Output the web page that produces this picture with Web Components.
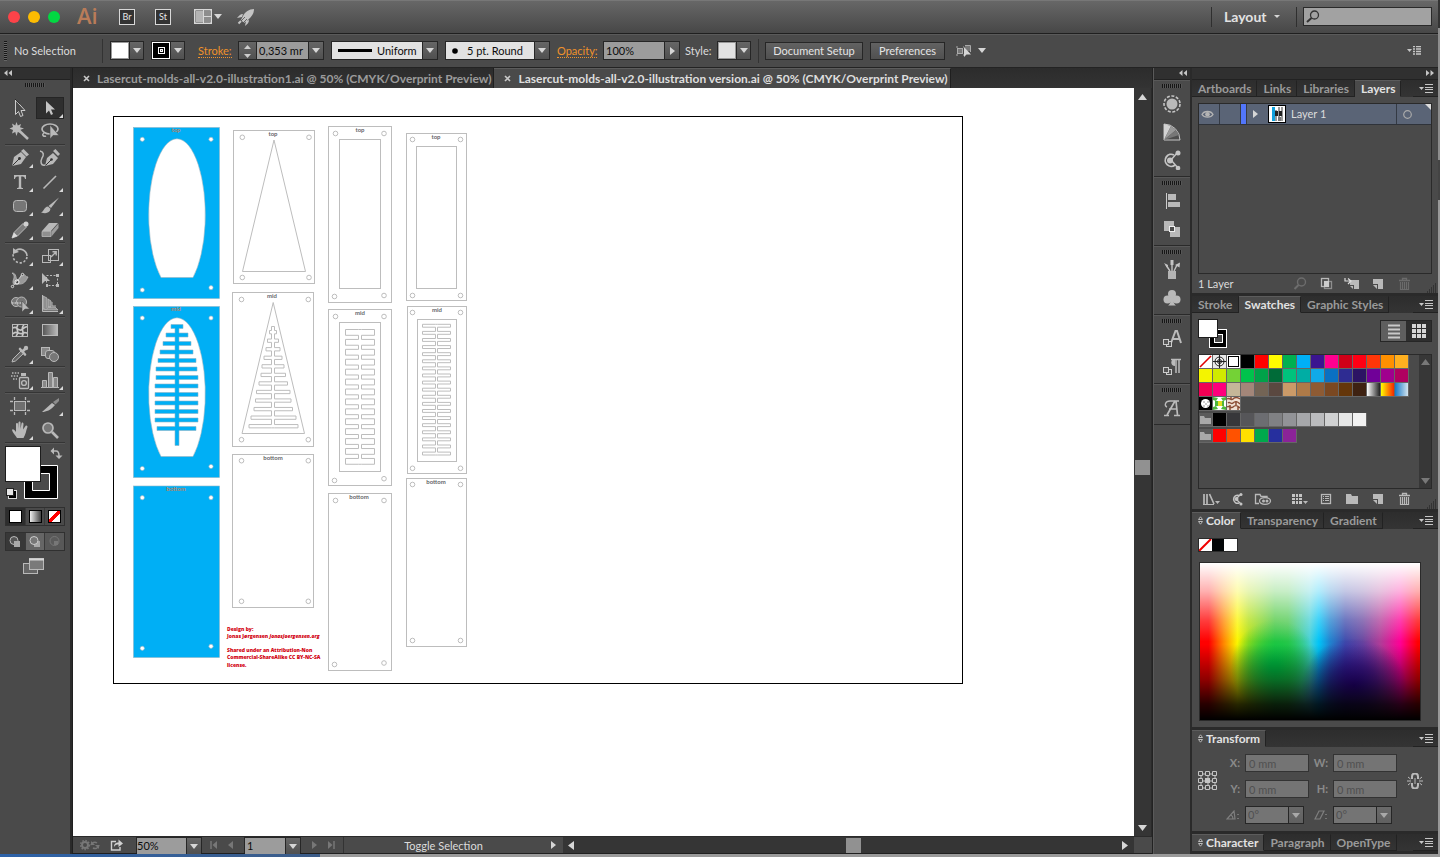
<!DOCTYPE html>
<html lang="en">
<head>
<meta charset="utf-8">
<title>Lasercut-molds-all-v2.0-illustration version.ai</title>
<style>
  html { background: #3b3b3b; }
  body { margin: 0; font: 11px/14px Lato, "Liberation Sans", sans-serif; color: #dcdcdc; }
</style>
</head>
<body>
<ai-app></ai-app>
<script>
/* ---------- helpers ---------- */
const reset = `
  *, *::before, *::after { box-sizing: border-box; }
  button, input, select { font: inherit; color: inherit; margin: 0; padding: 0; border: 0; background: none; border-radius: 0; appearance: none; outline: 0; }
  button { display: inline-flex; align-items: center; justify-content: center; }
`;
function define(name, css, html) {
  customElements.define(name, class extends HTMLElement {
    connectedCallback() {
      if (this.shadowRoot) return;
      const root = this.attachShadow({ mode: 'open' });
      root.innerHTML = `<style>${reset}${css}</style>` + (typeof html === 'function' ? html(this) : html);
    }
  });
}

/* ---------- icon set: [width, height, drawing] ---------- */
const g = '#b9b9b9';
const icons = {
  down: [8, 5, `<path d="M0 0H8L4 5Z" fill="#d6d6d6"/>`],
  smalldown: [6, 3, `<path d="M0 0H6L3 3Z" fill="#d6d6d6"/>`],
  right: [5, 8, `<path d="M0 0L5 4L0 8Z" fill="#d6d6d6"/>`],
  up10: [9, 6, `<path d="M0 6H9L4.500 0Z" fill="#d6d6d6"/>`],
  down10: [9, 6, `<path d="M0 0H9L4.500 6Z" fill="#d6d6d6"/>`],
  left10: [6, 9, `<path d="M6 0V9L0 4.500Z" fill="#d6d6d6"/>`],
  right10: [6, 9, `<path d="M0 0V9L6 4.500Z" fill="#d6d6d6"/>`],
  collapse: [8, 6, `<path d="M3.500 0V6L0 3ZM8 0V6L4.500 3Z" fill="#c6c6c6"/>`],
  expand: [8, 6, `<path d="M0 0V6L3.500 3ZM4.500 0V6L8 3Z" fill="#c6c6c6"/>`],
  close: [7, 7, `<path d="M1 1L6 6M6 1L1 6" stroke="#c8c8c8" stroke-width="1.600"/>`],
  flyout: [14, 9, `<path d="M0 3H5L2.500 6Z" fill="#c6c6c6"/><path d="M6 .5H14M6 3.500H14M6 5.500H14M6 8.500H14" stroke="#c6c6c6"/>`],
  barmenu: [14, 9, `<path d="M0 3H5L2.500 6Z" fill="#c6c6c6"/><path d="M6 .5H8M6 3H8M6 5.500H8M6 8H8M9 .5H14M9 3H14M9 5.500H14M9 8H14" stroke="#c6c6c6" stroke-width="1.300"/>`],
  arrange: [18, 15, `<rect x=".75" y=".75" width="16.500" height="13.500" fill="#4a4a4a" stroke="#d8d8d8" stroke-width="1.500"/><rect x="2" y="2" width="7" height="11" fill="#b4b4b4"/><rect x="10" y="2" width="6" height="5" fill="#8d8d8d"/><rect x="10" y="8" width="6" height="5" fill="#8d8d8d"/><path d="M9.500 1V14M9.500 7.500H17" stroke="#d8d8d8"/>`],
  rocket: [18, 18, `<path d="M17 1C12 1 8 4 6 8L4 12L7 15L11 12C14 9 17 6 17 1Z" fill="#c4c4c4"/><path d="M6 6C3 6 2 8 0 10L5 9ZM12 12C12 15 10 16 8 18L9 13Z" fill="#c4c4c4"/><path d="M3 14L8 9M5 16L10 11" stroke="#4c4c4c" stroke-width=".8"/><path d="M1.500 15.500L4 13" stroke="#c4c4c4" stroke-width="2"/>`],
  magnifier: [14, 13, `<circle cx="8.500" cy="5" r="4" fill="none" stroke="#333" stroke-width="1.300"/><path d="M5.500 8L1 12" stroke="#333" stroke-width="2"/>`],
  isolate: [16, 14, `<rect x="1.500" y="4.500" width="5" height="5" fill="#777" stroke="#aaa"/><path d="M0 3H2M0 11H2M7 3H8M7 11H8" stroke="#aaa"/><path d="M9 1.500H14.500V8" fill="none" stroke="#aaa"/><rect x="9" y="2" width="5" height="5" fill="#777"/><path d="M8 3V13L10.500 10.500H15Z" fill="#d6d6d6"/>`],
  /* tools */
  direct: [24, 24, `<path d="M7.500 4V18.500L10.500 15.500L12.500 20.500L15 19.500L13 14.500H17Z" fill="#4a4a4a" stroke="#ccc"/><path d="M7 3L12 8" stroke="#222" stroke-width=".8"/>`],
  select: [24, 24, `<path d="M8 5V17.500L11 14.500L13 19L15 18L13 13.500H17Z" fill="#c4c4c4"/>`],
  wand: [24, 24, `<path d="M8.500 2L9.800 5.500L13 4L12 7.300L16 8.500L12 10L13 13L9.800 12L8.500 16L7.200 12L4 13.500L5 10L1.500 8.500L5 7L4 3.500L7.200 5.500Z" fill="${g}"/><path d="M11 10.500L20 19" stroke="${g}" stroke-width="2.600"/>`],
  lasso: [24, 24, `<ellipse cx="12" cy="9" rx="8" ry="5" fill="none" stroke="${g}" stroke-width="1.700"/><path d="M6 13C3 15 6 17 8 16" fill="none" stroke="${g}" stroke-width="1.500"/><path d="M12 5V19L15 15.500H21Z" fill="${g}" stroke="#444" stroke-width=".6"/>`],
  pen: [24, 24, `<path d="M4 20L6 11L13 6L18 11L13 18L4 20Z" fill="${g}"/><path d="M13 5L15.500 3L21 8.500L18.500 10.500Z" fill="${g}"/><path d="M4.500 19.500L11 13" stroke="#333"/><circle cx="11.500" cy="12.500" r="1.400" fill="#333"/>`],
  curv: [24, 24, `<path d="M7 20L9 12L15 7L20 12L15 18Z" fill="${g}"/><path d="M15 5L17.500 3L22 8L20 10Z" fill="${g}"/><path d="M7.500 19.500L13 14" stroke="#333"/><circle cx="13.500" cy="13.500" r="1.300" fill="#333"/><path d="M2 5C6 6 6 9 4 12C2 16 3 20 7 19" fill="none" stroke="${g}" stroke-width="1.500"/>`],
  type: [24, 24, `<path d="M6 5H18V9H17C16.700 7 16 6.500 13.200 6.500V16.500C13.200 17.600 13.600 18 15 18V19H9V18C10.400 18 10.800 17.600 10.800 16.500V6.500C8 6.500 7.300 7 7 9H6Z" fill="${g}"/>`],
  line: [24, 24, `<path d="M5.500 18.500L18 6" stroke="${g}" stroke-width="1.600"/>`],
  rrect: [24, 24, `<rect x="5.500" y="6.500" width="13" height="11" rx="3" fill="#777" stroke="${g}"/>`],
  brush: [24, 24, `<path d="M21 3.500L13 14L10.500 12Z" fill="${g}"/><path d="M10 12.500L12.500 14.800C12 19 8 20 3 18.500C6 17.500 6 13 10 12.500Z" fill="${g}"/>`],
  pencil: [24, 24, `<path d="M4 20L6 14.500L15 5.500L18.500 9L9.500 18Z" fill="#7d7d7d" stroke="${g}"/><path d="M4 20L6 14.500L9.500 18Z" fill="#ddd"/><circle cx="18" cy="6" r="2.500" fill="#d0d0d0"/>`],
  eraser: [24, 24, `<path d="M4 13L11 5H20L13 13Z" fill="${g}"/><path d="M4 13.500H13V18.500H4Z" fill="#8f8f8f" stroke="${g}" stroke-width=".8"/><path d="M13.500 13.500L20.500 5.500V10L13.500 18.500Z" fill="#9d9d9d"/>`],
  rotate: [24, 24, `<path d="M8 6.500A7 7 0 0 1 19 12" fill="none" stroke="${g}" stroke-width="1.600"/><path d="M19 13A7 7 0 1 1 5.500 9.500" fill="none" stroke="${g}" stroke-width="1.600" stroke-dasharray="2.200 1.800"/><path d="M5 4V10L11 8Z" fill="${g}"/>`],
  scale: [24, 24, `<rect x="10.500" y="5.500" width="10" height="11" fill="none" stroke="${g}"/><rect x="4.500" y="11.500" width="8" height="7" fill="none" stroke="${g}"/><path d="M13 13L18 8M14.500 7.800H18.200V11.500" fill="none" stroke="${g}" stroke-width="1.400"/>`],
  width: [24, 24, `<path d="M4 5C9 5 7 11 10 12C13 11 12 6 15 6C17 6 17 9 20 9C18 13 16 16 12 16C9 16 5 18 5 14C5 11 8 8 4 5Z" fill="#999" stroke="${g}" stroke-width=".8"/><circle cx="9" cy="14" r="2" fill="#444" stroke="#fff"/><path d="M4 19L14 7" stroke="#ddd" stroke-width=".8"/><circle cx="4.500" cy="18.500" r="1.200" fill="#444" stroke="#ddd"/><circle cx="14.500" cy="6.500" r="1.200" fill="#444" stroke="#ddd"/>`],
  free: [24, 24, `<rect x="8.500" y="7.500" width="11" height="10" fill="none" stroke="${g}" stroke-dasharray="2 1.500"/><path d="M18 6H21V9H18ZM18 16H21V19H18ZM8 16H10V19H8Z" fill="${g}"/><path d="M4 5V16L7 13H12Z" fill="${g}"/>`],
  builder: [24, 24, `<circle cx="8" cy="10" r="4.500" fill="#777" stroke="${g}"/><circle cx="13.500" cy="10" r="5" fill="#777" stroke="${g}"/><path d="M4 11H16" stroke="#eee" stroke-dasharray="1.500 1"/><path d="M14 9V20L17 17H21.500Z" fill="${g}" stroke="#444" stroke-width=".5"/>`],
  persp: [24, 24, `<path d="M5 4L9 6V17H5ZM10 7L13 9V15H10ZM5 18H20L17 15H10" fill="#8f8f8f" stroke="${g}" stroke-width=".8"/><path d="M4.500 3V19.500H20M14 10V14H18" fill="none" stroke="${g}"/>`],
  mesh: [24, 24, `<rect x="4.500" y="6.500" width="15" height="12" fill="none" stroke="${g}"/><path d="M5 10C9 7 9 13 13 12C15 11 17 8 19 9M5 16C8 11 12 18 15 15C17 14 18 15 19 15M10 7C6 11 13 13 8 18M16 7C11 11 18 14 14 18" fill="none" stroke="#c8c8c8" stroke-width="1.600"/>`],
  grad: [24, 24, `<defs><linearGradient id="a"><stop stop-color="#555"/><stop offset="1" stop-color="#bbb"/></linearGradient></defs><rect x="4.500" y="6.500" width="15" height="11" fill="url(#a)" stroke="${g}"/>`],
  dropper: [24, 24, `<path d="M4 20L5 17L13 9L15.500 11.500L7.500 19Z" fill="#666" stroke="${g}"/><path d="M12 7L17 12.500M14.500 9.500L18 6" stroke="${g}" stroke-width="2.600" stroke-linecap="round"/><circle cx="18" cy="6" r="2.200" fill="${g}"/>`],
  blend: [24, 24, `<rect x="3.500" y="5.500" width="8" height="8" fill="#888" stroke="${g}"/><rect x="7.500" y="8.500" width="9" height="8" rx="2.500" fill="#6b6b6b" stroke="${g}"/><circle cx="16" cy="15" r="4.500" fill="#777" stroke="${g}"/>`],
  spray: [24, 24, `<rect x="11.500" y="9.500" width="9" height="11" rx="1" fill="#555" stroke="${g}" stroke-width="1.300"/><circle cx="16" cy="15" r="2.400" fill="none" stroke="${g}" stroke-width="1.400"/><path d="M13 8V5H18V8Z" fill="${g}"/><path d="M4 5H11M3 8H10M5 11H9" stroke="${g}" stroke-width="1.500" stroke-dasharray="1.500 1.300"/>`],
  chart: [24, 24, `<path d="M3 19.500H21" stroke="${g}"/><path d="M4.500 12.500H8.500V19.500H4.500ZM10.500 4.500H14.500V19.500H10.500ZM15.500 9.500H19.500V19.500H15.500Z" fill="#888" stroke="${g}"/>`],
  artboard: [24, 24, `<rect x="6.500" y="7.500" width="11" height="9" fill="#6e6e6e" stroke="${g}"/><path d="M6.500 3V6M17.500 3V6M6.500 18V21M17.500 18V21M2 7.500H5M19 7.500H22M2 16.500H5M19 16.500H22" stroke="${g}" stroke-width="1.300"/>`],
  slice: [24, 24, `<path d="M4 18L14 9L17 11C13 16 8 18 4 18Z" fill="${g}"/><path d="M15 8L21 4V7L17.500 10.500Z" fill="#8d8d8d"/>`],
  hand: [24, 24, `<path d="M4 12C4.500 10.500 6 11 8 14V6C8 4.500 10 4.500 10 6V11L10.500 4.500C10.700 3 12.500 3 12.500 4.500V11L13.500 5.500C13.800 4 15.500 4.500 15.500 6L15 11.500L17.500 8C18.500 7 20 8 19.300 9.500C18 12.500 18 16 15.500 20H9C7.500 17 4.500 15 4 12Z" fill="${g}"/>`],
  zoom: [24, 24, `<circle cx="10" cy="10" r="5" fill="#777" stroke="${g}" stroke-width="1.700"/><path d="M14 14L20 20" stroke="${g}" stroke-width="2.600"/>`],
  fillstroke: [60, 58, `<path d="M49 6H51C53 6 54 7 54 11" fill="none" stroke="${g}" stroke-width="1.500"/><path d="M49 2.500V9.500L45.500 6ZM50.500 10.500H57.500L54 14Z" fill="${g}"/><path d="M19.500 20.500H52.500V53.500H19.500Z" fill="#000" stroke="#fff"/><path d="M27.500 28.500H44.500V45.500H27.500Z" fill="#4a4a4a" stroke="#fff"/><rect x=".5" y="1.500" width="35" height="35" fill="#fff" stroke="#1d1d1d"/><rect x="3.500" y="45.500" width="8" height="8" fill="#000" stroke="#ddd"/><rect x="1.500" y="43.500" width="7" height="7" fill="#e6e6e6" stroke="#222"/>`],
  screen: [22, 17, `<rect x=".5" y="5.500" width="14" height="10" fill="#666" stroke="${g}"/><rect x="6.500" y=".5" width="14" height="11" fill="#7a7a7a" stroke="${g}"/><path d="M6 1.500H21" stroke="#d6d6d6" stroke-width="2"/>`],
  d1: [12, 11, `<circle cx="5" cy="4.500" r="4" fill="#555" stroke="${g}"/><rect x="5" y="5" width="6" height="6" fill="#a9a9a9"/>`],
  d2: [12, 11, `<rect x="5" y="5" width="6" height="6" fill="#a9a9a9"/><circle cx="5" cy="4.500" r="4" fill="#777" stroke="#ccc"/>`],
  d3: [12, 11, `<circle cx="5.500" cy="5" r="4.500" fill="#5b5b5b" stroke="#777"/><rect x="5" y="5" width="4" height="4" fill="#777"/>`],
  /* dock */
  kuler: [20, 20, `<circle cx="10" cy="10" r="8" fill="none" stroke="#c6c6c6" stroke-width="1.600" stroke-dasharray="3 1.600"/><circle cx="10" cy="10" r="5.500" fill="#b9b9b9"/>`],
  guide: [20, 20, `<path d="M2 18V2A16 16 0 0 1 18 18Z" fill="#4d4d4d" stroke="#c4c4c4"/><path d="M2 18V2L9 4Z" fill="#d2d2d2"/><path d="M2 18L9 4L14 8Z" fill="#9a9a9a"/><path d="M2 18L14 8L17 13Z" fill="#777"/>`],
  share: [20, 20, `<path d="M15 3L9 10L16 18" fill="none" stroke="#c4c4c4" stroke-width="1.500"/><path d="M12 5A6 6 0 1 0 13 15" fill="none" stroke="#c4c4c4" stroke-width="1.800"/><circle cx="8" cy="10.500" r="3" fill="#c4c4c4"/><circle cx="16" cy="3" r="2.500" fill="#c4c4c4"/><circle cx="16" cy="18" r="2.300" fill="#c4c4c4"/>`],
  align: [20, 20, `<path d="M4.500 2V18" stroke="#ccc"/><rect x="6" y="3" width="8" height="6" fill="#b9b9b9"/><rect x="6" y="11" width="12" height="5" fill="#b9b9b9"/>`],
  pathf: [20, 20, `<rect x="2" y="2" width="10" height="10" fill="#b9b9b9"/><rect x="8" y="8" width="10" height="10" fill="#b9b9b9"/><rect x="7.500" y="7.500" width="5" height="5" fill="#4a4a4a" stroke="#eee"/>`],
  brushes: [20, 20, `<rect x="6" y="11" width="8" height="8" fill="#b4b4b4"/><path d="M8 11L4 5M10 11V3M12 11L15 5" stroke="#c4c4c4" stroke-width="1.400"/><path d="M2 3L6 5L5.500 8.500ZM8.500 0H11.500V5H8.500ZM13 5L18 2.500L17.500 7.500Z" fill="#c4c4c4"/>`],
  club: [20, 20, `<circle cx="10" cy="6" r="4" fill="#b9b9b9"/><circle cx="5.500" cy="11.500" r="4" fill="#b9b9b9"/><circle cx="14.500" cy="11.500" r="4" fill="#b9b9b9"/><path d="M9 8H11C11 14 12 16 14 17.500H6C8 16 9 14 9 8Z" fill="#b9b9b9"/>`],
  charstyle: [20, 20, `<path d="M9 14L13.500 2H15L19 14M10.500 10H17" fill="none" stroke="#bbb" stroke-width="2"/><rect x="4.500" y="12.500" width="5" height="5" fill="#555" stroke="#ccc"/><rect x="1.500" y="10.500" width="5" height="5" fill="#555" stroke="#ccc"/>`],
  parastyle: [20, 20, `<path d="M14 16V2M17 16V2M9 2.500H19" fill="none" stroke="#bbb" stroke-width="1.500"/><path d="M13 2C8 2 8 9 13 9Z" fill="#bbb"/><rect x="4.500" y="12.500" width="5" height="5" fill="#555" stroke="#ccc"/><rect x="1.500" y="10.500" width="5" height="5" fill="#555" stroke="#ccc"/>`],
  glyphs: [20, 20, `<path d="M13 3L5 17M14 3L15.500 17M7 11H15" fill="none" stroke="#bbb" stroke-width="1.700"/><path d="M2 17.500H7M12 17.500H18M17 3H8C3 3 2 8 5 9" fill="none" stroke="#bbb" stroke-width="1.400"/>`],
  /* panels */
  eye: [13, 9, `<path d="M1 4.500C3 .5 10 .5 12 4.500C10 8 3 8 1 4.500Z" fill="none" stroke="#b4b4b4" stroke-width="1.300"/><circle cx="6.500" cy="4.300" r="2.300" fill="#b4b4b4"/>`],
  target: [9, 9, `<circle cx="4.500" cy="4.500" r="3.800" fill="none" stroke="#aaa" stroke-width="1.200"/>`],
  thumb: [18, 18, `<rect width="18" height="18" fill="#000"/><rect x="1" y="1" width="16" height="16" fill="#fff"/><path d="M4 2H7V16H4Z" fill="#10a0dc"/><path d="M7 5H9V16H7ZM10 2H12V14H10ZM13 2H15V16H13Z" fill="#999"/><path d="M7 6H10V11H7ZM11 6H14V11H11Z" fill="#222"/><path d="M10 12H13V16H10Z" fill="#777"/>`],
  find: [16, 14, `<circle cx="9.500" cy="5" r="4" fill="none" stroke="#6d6d6d" stroke-width="1.400"/><path d="M6.500 8L2.500 12" stroke="#6d6d6d" stroke-width="2"/>`],
  clip: [16, 14, `<rect x="3.500" y="1.500" width="7" height="8" fill="none" stroke="${g}" stroke-width="1.300"/><rect x="6.500" y="4.500" width="7" height="7" fill="none" stroke="#8e8e8e" stroke-width="1.300"/><rect x="6" y="4" width="5" height="6" fill="#ccc"/>`],
  sublayer: [16, 14, `<path d="M6 3H15V12H10V8H6Z" fill="${g}"/><path d="M6 9H9V12Z" fill="${g}"/><path d="M1 1V4H6M4 1.500L7 4L4 7" fill="none" stroke="#ddd" stroke-width="1.200"/>`],
  newitem: [16, 14, `<path d="M3 2H13V12H8V7H3Z" fill="${g}"/><path d="M3 8H7V12Z" fill="${g}"/>`],
  trash: [16, 14, `<path d="M3 3.500H14M6.500 3V1.500H10.500V3" fill="none" stroke="currentColor" stroke-width="1.300"/><path d="M4.500 5V12.500H12.500V5M6.500 5V12M8.500 5V12M10.500 5V12" fill="none" stroke="currentColor" stroke-width="1.200"/>`],
  resize: [10, 10, `<path d="M8 1H10M6 3H10M4 5H10M2 7H10M0 9H10" stroke="#1d1d1d" stroke-width="1.200" stroke-dasharray="1 1"/>`],
  libs: [18, 14, `<path d="M2 2V12M5 2V12M7.500 2L12 12" stroke="${g}" stroke-width="1.700"/><path d="M1 12.500H12" stroke="${g}"/><path d="M13 9H18L15.500 12Z" fill="${g}"/>`],
  sharesm: [16, 14, `<path d="M12 2L7 7L12 12" fill="none" stroke="#c4c4c4" stroke-width="1.300"/><path d="M10 3.500A4 4 0 1 0 10 11" fill="none" stroke="#c4c4c4" stroke-width="1.500"/><circle cx="7.500" cy="7" r="2" fill="#c4c4c4"/><circle cx="12" cy="2.500" r="1.500" fill="#c4c4c4"/><circle cx="12" cy="12" r="1.500" fill="#c4c4c4"/>`],
  folderadd: [18, 14, `<path d="M5 11.500H1.500V2.500H6L7 4.500H13V6" fill="none" stroke="${g}" stroke-width="1.300"/><ellipse cx="11" cy="9" rx="5.500" ry="3.300" fill="#4a4a4a" stroke="${g}" stroke-width="1.300"/><circle cx="9.500" cy="9" r="1.500" fill="${g}"/><circle cx="13" cy="9" r="1.500" fill="${g}"/>`],
  kinds: [18, 14, `<rect x="1" y="2" width="10" height="10" fill="#c4c4c4"/><path d="M4.500 2V12M7.500 2V12M1 5.500H11M1 8.500H11" stroke="#4a4a4a"/><path d="M12 9H17L14.500 12Z" fill="${g}"/>`],
  options: [16, 14, `<rect x="3.500" y="2.500" width="9" height="9" fill="#4a4a4a" stroke="${g}" stroke-width="1.300"/><path d="M5 4.500H6M7 4.500H11M5 6.500H6M7 6.500H11M5 8.500H6M7 8.500H11" stroke="${g}"/>`],
  folder: [16, 14, `<path d="M2 2H7L8 4H14V12H2Z" fill="${g}"/>`],
  sort: [5, 9, `<path d="M.5 3.500L2.500 .8L4.500 3.500ZM.5 5.500L2.500 8.200L4.500 5.500Z" fill="#333" stroke="#bbb"/>`],
  refpt: [20, 20, `<path d="M3 3H17V17H3ZM3 10H17M10 3V17" fill="none" stroke="#c4c4c4" stroke-width="1"/><path d="M.5 .5H4.500V4.500H.5ZM7.500 .5H11.500V4.500H7.500ZM14.500 .5H18.500V4.500H14.500ZM.5 7.500H4.500V11.500H.5ZM14.500 7.500H18.500V11.500H14.500ZM.5 14.500H4.500V18.500H.5ZM7.500 14.500H11.500V18.500H7.500ZM14.500 14.500H18.500V18.500H14.500Z" fill="#4a4a4a" stroke="#c4c4c4"/><rect x="7" y="7" width="5" height="5" fill="#c4c4c4"/>`],
  link: [16, 16, `<path d="M5 6V3.500A3 3 0 0 1 11 3.500V6M5 10V12.500A3 3 0 0 0 11 12.500V10" fill="none" stroke="#bbb" stroke-width="2"/><path d="M8 5V11M0 8H4M12 8H16M1 4L3.500 6M1 12L3.500 10M15 4L12.500 6M15 12L12.500 10" stroke="#bbb"/>`],
  angle: [14, 10, `<path d="M1 9H9L8 1ZM5 5C7 6 7 7 7 9" fill="none" stroke="#7f7f7f" stroke-width="1.200"/><path d="M12 4V5M12 8V9" stroke="#8a8a8a" stroke-width="1.400"/>`],
  shear: [14, 10, `<path d="M1 9L5 1H10L6 9Z" fill="none" stroke="#7f7f7f" stroke-width="1.200"/><path d="M12 4V5M12 8V9" stroke="#8a8a8a" stroke-width="1.400"/>`],
  listview: [14, 15, `<path d="M1 1.500H13M1 5.500H13M1 9.500H13M1 13.500H13" stroke="#c9c9c9" stroke-width="2"/>`],
  gridview: [14, 14, `<path d="M0 0H4V4H0ZM5 0H9V4H5ZM10 0H14V4H10ZM0 5H4V9H0ZM5 5H9V9H5ZM10 5H14V9H10ZM0 10H4V14H0ZM5 10H9V14H5ZM10 10H14V14H10Z" fill="#d6d6d6"/>`],
  minifs: [30, 30, `<rect x="11.500" y="10.500" width="17" height="18" fill="#000" stroke="#fff"/><rect x="16.500" y="15.500" width="8" height="8" fill="#4a4a4a" stroke="#fff"/><rect x=".5" y=".5" width="19" height="18" fill="#fff" stroke="#1d1d1d"/>`],
  sync: [20, 12, `<circle cx="5" cy="6" r="3" fill="none" stroke="#777" stroke-width="2"/><circle cx="5" cy="6" r="4.500" fill="none" stroke="#777" stroke-dasharray="1.500 1.500" stroke-width="1.500"/><path d="M11 6A4 4 0 0 1 17 4M19 6A4 4 0 0 1 13 9" fill="none" stroke="#777" stroke-width="1.500"/><path d="M11 2V6H15ZM19 10V6H15Z" fill="#777"/>`],
  export: [13, 12, `<path d="M6 2.500H1.500V11H10V8" fill="none" stroke="#d0d0d0" stroke-width="1.400"/><path d="M4 8C4 4.500 6 3.500 8.500 3.500V.5L13 4.500L8.500 8V5.500C6.500 5.500 5 6 4 8Z" fill="#d0d0d0"/>`],
  first: [8, 8, `<path d="M1 0V8" stroke="#777" stroke-width="1.500"/><path d="M7 0V8L2.500 4Z" fill="#777"/>`],
  prev: [6, 8, `<path d="M5 0V8L0 4Z" fill="#777"/>`],
  next: [6, 8, `<path d="M1 0V8L6 4Z" fill="#777"/>`],
  last: [8, 8, `<path d="M7 0V8" stroke="#777" stroke-width="1.500"/><path d="M1 0V8L5.500 4Z" fill="#777"/>`],
  uniform: [36, 3, `<rect width="34" height="3" fill="#000"/>`],
  dot: [6, 6, `<circle cx="3" cy="3" r="2.800" fill="#000"/>`],
  spin: [10, 14, `<path d="M1 5H8L4.500 1ZM1 10H8L4.500 14Z" fill="#ccc"/>`],
  none: [14, 14, `<rect width="14" height="14" fill="#fff"/><path d="M1 13L13 1" stroke="#f00000" stroke-width="2"/>`]
};
define('ai-icon', `:host { display: inline-block; flex: none; line-height: 0; } svg { display: block; }`, el => {
  const [w, h, body] = icons[el.getAttribute('name')];
  return `<svg width="${w}" height="${h}" viewBox="0 0 ${w} ${h}" aria-hidden="true">${body}</svg>`;
});

/* stripes that mark a draggable edge */
define('ai-grip', `
  :host { display: block; width: 20px; height: 4px; background: repeating-linear-gradient(90deg, #161616 0 1px, #565656 1px 2px); }
  :host([vertical]) { width: 3px; height: 20px; background: repeating-linear-gradient(#161616 0 1px, #666 1px 2px); }`, '');

/* drop-down: a select with an arrow cell over its right end */
define('ai-combo', `
  :host { display: inline-grid; grid-template-columns: 1fr 15px; width: var(--w); height: var(--h, 19px); border: 1px solid #262626; flex: none; }
  :host, ::slotted(*) { box-sizing: border-box; }
  select { grid-area: 1 / 1 / 2 / 3; min-width: 0; width: 100%; height: 100%; padding: 0 15px 0 var(--pad, 2px); background: var(--bg, #9c9c9c); color: var(--fg, #0c0c0c); font-size: 11px; line-height: 16px; opacity: 1; }
  .arrow { grid-area: 1 / 2 / 2 / 3; display: grid; place-items: center; border-left: 1px solid #262626; background: linear-gradient(var(--a1, #666), var(--a2, #505050)); pointer-events: none; z-index: 1; }
  :host([disabled]) .arrow ai-icon { opacity: .6; }
  .pic { grid-area: 1 / 1 / 2 / 2; display: flex; align-items: center; padding-left: 6px; pointer-events: none; z-index: 1; }`,
  el => `<select aria-label="${el.getAttribute('label')}" ${el.hasAttribute('disabled') ? 'disabled' : ''}><option>${el.getAttribute('value')}</option></select>
    <span class="pic"><slot></slot></span><span class="arrow"><ai-icon name="${el.getAttribute('arrow') || 'down'}"></ai-icon></span>`);

define('ai-well', `
  :host { display: inline-flex; flex: none; }
  button { width: 34px; height: 19px; border: 1px solid #262626; align-items: stretch; }
  .c { width: 18px; background: #fff; border: 1px solid #999; display: grid; place-items: center; }
  :host([kind="stroke"]) .c { background: #000; border-color: #fff; }
  :host([kind="style"]) .c { background: #e2e2e2; }
  .a { flex: 1; border-left: 1px solid #262626; background: linear-gradient(#666, #505050); display: grid; place-items: center; }
  i { display: none; place-items: center; width: 7px; height: 7px; border: 1px solid #fff; background: #000; }
  i::after { content: ""; width: 3px; height: 3px; border: 1px solid #fff; background: #4a4a4a; }
  :host([kind="stroke"]) i { display: grid; }`,
  el => `<button aria-label="${el.getAttribute('label')}"><span class="c"><i></i></span><span class="a"><ai-icon name="down"></ai-icon></span></button>`);

/* ---------- title bar ---------- */
define('ai-titlebar', `
  :host { display: flex; align-items: center; height: 34px; padding: 0 6px 1px 8px; background: linear-gradient(#676767, #474747); border-bottom: 1px solid #1f1f1f; border-top: 1px solid #777; box-sizing: border-box; }
  .lights { display: flex; gap: 8px; }
  .lights button { width: 12px; height: 12px; border-radius: 50%; }
  .logo { font: 600 22px/24px "Open Sans", sans-serif; color: #b97c59; width: 26px; margin: 0 16px 4px 17px; }
  .app { width: 16px; height: 16px; border: 1px solid #d8d8d8; background: #333; font-size: 9px; line-height: 9px; color: #e6e6e6; margin-right: 20px; }
  .arr { gap: 2px; margin: 0 15px 0 3px; }
  .fill { flex: 1; }
  .sep { width: 1px; height: 20px; background: #2f2f2f; }
  .ws { display: flex; align-items: center; margin: 0 16px 0 12px; }
  .ws select { font-weight: bold; font-size: 14px; line-height: 18px; width: 50px; color: #e2e2e2; }
  .search { display: flex; align-items: center; width: 129px; height: 19px; margin-left: 6px; padding-left: 2px; background: #a2a2a2; border: 1px solid #2a2a2a; }
  .search input { flex: 1; min-width: 0; }`, `
  <div class="lights"><button aria-label="Close" style="background:#fc4349"></button><button aria-label="Minimise" style="background:#fdbc02"></button><button aria-label="Full screen" style="background:#02d842"></button></div>
  <span class="logo">Ai</span>
  <button class="app">Br</button><button class="app">St</button>
  <button class="arr" aria-label="Arrange documents"><ai-icon name="arrange"></ai-icon><ai-icon name="down"></ai-icon></button>
  <button aria-label="GPU performance"><ai-icon name="rocket"></ai-icon></button>
  <span class="fill"></span><span class="sep"></span>
  <span class="ws"><select aria-label="Workspace"><option>Layout</option></select><ai-icon name="smalldown"></ai-icon></span>
  <span class="sep"></span>
  <label class="search"><ai-icon name="magnifier"></ai-icon><input type="search" aria-label="Search help"></label>`);

/* ---------- control bar ---------- */
define('ai-controlbar', `
  :host { display: flex; align-items: center; height: 34px; padding: 0 17px 1px 4px; border-top: 1px solid #5a5a5a; border-bottom: 1px solid #232323; background: #4a4a4a; box-sizing: border-box; }
  .none { width: 88px; margin-left: 7px; }
  .sep { width: 1px; height: 24px; background: #333; }
  a { color: #f0922b; text-decoration: none; border-bottom: 1px dotted #f0922b; line-height: 13px; }
  .spin { margin-left: 6px; width: 18px; height: 19px; background: linear-gradient(#666, #505050); border: 1px solid #262626; border-right: 0; }
  .btn { height: 18px; border: 1px solid #262626; background: linear-gradient(#626262, #505050); color: #e4e4e4; }
  .g7 { margin-left: 7px; }
  .fill { flex: 1; }`, `
  <ai-grip vertical></ai-grip><span class="none">No Selection</span><span class="sep"></span>
  <ai-well class="g7" label="Fill"></ai-well><ai-well class="g7" kind="stroke" label="Stroke colour"></ai-well>
  <a href="#" style="margin-left:13px;width:34px">Stroke:</a>
  <button class="spin" aria-label="Step stroke weight"><ai-icon name="spin"></ai-icon></button>
  <ai-combo style="--w:68px" label="Stroke weight" value="0,353 mr"></ai-combo>
  <ai-combo class="g7" style="--w:107px;--bg:#e2e2e2;--pad:45px" label="Width profile" value="Uniform"><ai-icon name="uniform"></ai-icon></ai-combo>
  <ai-combo class="g7" style="--w:105px;--bg:#e2e2e2;--pad:21px" label="Brush" value="5 pt. Round"><ai-icon name="dot"></ai-icon></ai-combo>
  <a href="#" style="margin-left:7px;width:40px">Opacity:</a>
  <ai-combo style="--w:77px;margin-left:6px" label="Opacity" value="100%" arrow="right"></ai-combo>
  <span style="width:26px;margin:0 6px 0 5px">Style:</span>
  <ai-well kind="style" label="Graphic style"></ai-well><span class="sep g7"></span>
  <button class="btn" style="width:98px;margin-left:6px">Document Setup</button>
  <button class="btn g7" style="width:75px">Preferences</button>
  <button style="gap:6px;margin-left:11px" aria-label="Select similar objects"><ai-icon name="isolate"></ai-icon><ai-icon name="down"></ai-icon></button>
  <span class="fill"></span><button aria-label="Control bar menu"><ai-icon name="barmenu"></ai-icon></button>`);

/* ---------- tools ---------- */
define('ai-tool', `
  :host { display: block; height: 24px; }
  button { position: relative; width: 30px; height: 24px; padding: 1px; }
  :host([on]) button::before { content: ""; position: absolute; inset: 1px; background: #2f2f2f; border: 1px solid #252525; }
  ai-icon { position: relative; }
  :host([more]) button::after { content: ""; position: absolute; right: 2px; bottom: 2px; border: 2px solid; border-color: transparent #d8d8d8 #d8d8d8 transparent; }`,
  el => `<button aria-label="${el.getAttribute('name')}"><ai-icon name="${el.getAttribute('name')}"></ai-icon></button>`);
define('ai-tools', `
  :host { display: flex; flex-direction: column; align-items: center; width: 72px; background: #4a4a4a; border-right: 2px solid #2a2a2a; box-sizing: border-box; }
  .head { align-self: stretch; display: flex; align-items: flex-start; height: 12px; padding: 2px 0 0 4px; background: #303030; border-bottom: 1px solid #222; }
  ai-grip { margin: 3px 0 9px; }
  .grid { display: grid; grid-template-columns: 30px 30px; }
  hr { grid-column: 1 / 3; width: 60px; height: 2px; margin: 0; border: 0; background: #353535; border-bottom: 1px solid #575757; }
  .fs { margin-top: 1px; }
  .seg { display: flex; border: 1px solid #303030; margin-top: 4px; width: 60px; height: 19px; }
  .seg button { flex: 1; background: #4a4a4a; border-right: 1px solid #3a3a3a; }
  .seg button:last-child { border-right: 0; }
  .seg .on { background: #2d2d2d; }
  .seg i { width: 13px; height: 13px; border: 1px solid #000; background: #fff; }
  .draw { margin-top: 6px; }
  .draw button { background: #666; } .draw .on { background: #383838; } .draw button:last-child { background: #585858; }
  .screen { margin: 7px 2px 0 0; }`, () => {
  const t = (n, m = 1, on = 0) => `<ai-tool name="${n}" ${m ? 'more' : ''} ${on ? 'on' : ''}></ai-tool>`;
  return `<div class="head"><button aria-label="Collapse tools"><ai-icon name="collapse"></ai-icon></button></div>
  <ai-grip></ai-grip>
  <div class="grid">
    ${t('direct', 0)}${t('select', 1, 1)}${t('wand', 0)}${t('lasso', 0)}<hr>
    ${t('pen')}${t('curv', 0)}${t('type')}${t('line')}${t('rrect')}${t('brush')}${t('pencil')}${t('eraser')}<hr>
    ${t('rotate')}${t('scale')}${t('width')}${t('free', 0)}${t('builder')}${t('persp')}<hr>
    ${t('mesh', 0)}${t('grad', 0)}${t('dropper')}${t('blend', 0)}<hr>
    ${t('spray')}${t('chart')}<hr>
    ${t('artboard', 0)}${t('slice')}${t('hand')}${t('zoom', 0)}<hr>
  </div>
  <button class="fs" aria-label="Fill and stroke"><ai-icon name="fillstroke"></ai-icon></button>
  <div class="seg"><button class="on" aria-label="Colour"><i></i></button><button aria-label="Gradient"><i style="background:linear-gradient(90deg,#eee,#444)"></i></button><button aria-label="None"><i style="background:linear-gradient(135deg,#fff 40%,#f00 40% 60%,#fff 60%)"></i></button></div>
  <div class="seg draw"><button class="on" aria-label="Draw normal"><ai-icon name="d1"></ai-icon></button><button aria-label="Draw behind"><ai-icon name="d2"></ai-icon></button><button aria-label="Draw inside"><ai-icon name="d3"></ai-icon></button></div>
  <button class="screen" aria-label="Change screen mode"><ai-icon name="screen"></ai-icon></button>`;
});

/* ---------- document ---------- */
define('ai-doctab', `
  :host { display: flex; align-items: center; gap: 7px; height: 20px; padding: 1px 2px 0 10px; color: #9b9b9b; font-size: 12px; font-weight: bold; border-right: 1px solid #1f1f1f; white-space: nowrap; box-sizing: border-box; }
  :host([on]) { background: #4a4a4a; color: #dedede; border-top: 1px solid #5c5c5c; padding-top: 0; }`,
  `<button aria-label="Close document"><ai-icon name="close"></ai-icon></button><span><slot></slot></span>`);

define('ai-artboard', `
  :host { display: block; background: #fff; overflow: hidden; padding: 28px 0 0 40px; }
  svg { display: block; }
  .o { fill: none; stroke: #bdbdbd; }
  .b { fill: #00aff5; stroke: #8ab4c8; stroke-width: .6; }
  .w { fill: #fff; stroke: #9cb4bf; stroke-width: .6; }
  text { font: bold 6px Lato, sans-serif; fill: #66676b; text-anchor: middle; }
  .r text { font: 800 5px "Open Sans", sans-serif; fill: #d2000f; text-anchor: start; }
  text.bl { fill: #b58468; }`, () => {
  /* outline of a spine with cross bars, each bar given as [top, bottom, left, right] */
  const comb = (cx, t, bars, top, bottom = bars[bars.length - 1][1]) => {
    let p = `M${cx - t} ${top}H${cx + t}`;
    for (const [a, b, , r] of bars) p += `V${a}H${r}V${b}H${cx + t}`;
    p += `V${bottom}H${cx - t}`;
    for (const [a, b, l] of [...bars].reverse()) p += `V${b}H${l}V${a}H${cx - t}`;
    return p + 'Z';
  };
  const rect = (x, y, x2, y2, c = 'o') => `<rect class="${c}" x="${x}" y="${y}" width="${x2 - x}" height="${y2 - y}"/>`;
  const holes = (list, c = 'o', r = 2.3) => list.map(([x, y]) => `<circle class="${c}" cx="${x}" cy="${y}" r="${r}"/>`).join('');
  const label = (x, y, s, c = '') => `<text x="${x}" y="${y}" class="${c}">${s}</text>`;
  const frame = (x, y, x2, y2, hs, s, lx) => rect(x, y, x2, y2) + holes(hs) + label(lx, y + 5, s);
  const fish = [[171, 183], [166, 188], [163, 191], [160, 193], [158, 196], [156, 197], [156, 198], [155, 198], [155, 198], [155, 198], [155, 198], [155, 198], [157, 196]]
    .map(([l, r], i) => [324.5 + i * 8.5, 328.5 + i * 8.5, l, r]);
  const tree = [[269.5, 276.5], [267.5, 278.5], [266, 280], [264, 282], [262, 284], [261, 285.5], [259, 287.5], [256.5, 290], [255.500, 291], [254, 292.500], [251, 296], [249, 298]]
    .map(([l, r], i) => [330.5 + i * 8.55, 333.8 + i * 8.55, l, r]);
  const c3 = Array.from({ length: 14 }, (_, i) => [329.5 + i * 9.92, 335.3 + i * 9.92, 345.5, 374.5]);
  const c4 = Array.from({ length: 19 }, (_, i) => [324.3 + i * 7.1, 327.2 + i * 7.1, 422.5, 450.5]);
  return `<svg width="850" height="568" viewBox="113 116 850 568" role="img" aria-label="Artboard 1">
  <rect x="113.500" y="116.500" width="849" height="567" fill="#fff" stroke="#000"/>
  ${rect(133.5, 127.5, 219.5, 298.5, 'b')}${rect(133.5, 306.5, 219.5, 477.5, 'b')}${rect(133.5, 486, 219.5, 657.5, 'b')}
  <path class="w" d="M161 277.500A28.300 76 0 1 1 193 277.500Z"/><path class="w" d="M161 456.500A28.300 76 0 1 1 193 456.500Z"/>
  <path class="b" d="${comb(177, 2, fish, 324.5, 445.5)}"/>
  ${holes([[142.3, 139.3], [211, 139.3], [142.3, 290], [211, 287.7], [142.3, 318], [211, 318], [142.3, 468.5], [211, 466.5], [142.3, 497.7], [211, 497.7], [142.3, 648.3], [211, 646.3]], 'w', 2.1)}
  ${label(176, 132, 'top', 'bl')}${label(176, 311, 'mid', 'bl')}${label(176, 491, 'bottom', 'bl')}
  ${frame(233.5, 130.5, 314.5, 283.5, [[242.3, 137.3], [309, 137.3], [242.3, 277.5], [309, 277.5]], 'top', 273)}
  <path class="o" d="M274 140L242.500 271.500H305.500Z"/>
  ${frame(232.5, 292.5, 313.5, 446.5, [[241.5, 299.5], [308.3, 299.5], [241.5, 439.7], [308.3, 439.7]], 'mid', 272)}
  <path class="o" d="M273.200 302.500L242 433.500H304.500Z"/><path class="o" d="${comb(273, 1.5, tree, 326.5)}"/>
  ${frame(232.5, 454.5, 313.5, 607.5, [[241.5, 460.7], [308.3, 460.7], [241.5, 601.3], [308.3, 601.3]], 'bottom', 273)}
  ${frame(328.5, 126.5, 391.5, 302.5, [[335.5, 133.5], [384, 133.5], [334.5, 296.5], [384, 295.5]], 'top', 360)}${rect(339.5, 139.5, 380.5, 288.5)}
  ${frame(328.5, 309.5, 391.5, 485.5, [[335.5, 316.5], [384, 316.5], [334.5, 480.5], [384, 478.7]], 'mid', 360)}${rect(339.5, 322.5, 380.5, 471.5)}
  <path class="o" d="${comb(360, 1.5, c3, 329.5)}"/>
  ${frame(328.5, 493.5, 391.5, 670.5, [[335.5, 500.5], [384, 500.5], [334.5, 664.5], [384, 663]], 'bottom', 359)}
  ${frame(406.5, 133.5, 466.5, 300.5, [[412.5, 139.5], [460.5, 139.5], [412.5, 295.5], [460.5, 295.5]], 'top', 436)}${rect(416.5, 146.5, 456.5, 288.5)}
  ${frame(407.5, 306.5, 466.5, 473.5, [[412.5, 312.5], [460.5, 312.5], [412.5, 468.3], [460.5, 468.3]], 'mid', 437)}${rect(417.5, 319.5, 456.5, 461.5)}
  <path class="o" d="${comb(436.5, 1, c4, 324.3)}"/>
  ${frame(406.5, 478.5, 466.5, 646.5, [[412.5, 484.5], [460.5, 484.5], [412.5, 640.5], [460.5, 640.5]], 'bottom', 436)}
  <g class="r"><text x="227" y="631">Design by:</text><text x="227" y="638">Jonas Jørgensen <tspan font-style="italic">jonasjoergensen.org</tspan></text><text x="227" y="652">Shared under an Attribution-Non</text><text x="227" y="659">Commercial-ShareAlike CC BY-NC-SA</text><text x="227" y="667">license.</text></g>
  </svg>`;
});

define('ai-scroll', `
  :host { display: flex; align-items: center; justify-content: space-between; background: #353535; box-sizing: border-box; }
  :host([vertical]) { flex-direction: column; width: 18px; padding: 6px 0 5px; border-right: 1px solid #2a2a2a; }
  :host(:not([vertical])) { padding: 0 6px 0 5px; }
  .thumb { width: 15px; height: 15px; background: #919191; }
  :host([vertical]) .thumb { margin-top: 10px; }
  :host(:not([vertical])) .thumb { margin-left: 10px; }`,
  el => el.hasAttribute('vertical')
    ? `<button aria-label="Scroll up"><ai-icon name="up10"></ai-icon></button><span class="thumb"></span><button aria-label="Scroll down"><ai-icon name="down10"></ai-icon></button>`
    : `<button aria-label="Scroll left"><ai-icon name="left10"></ai-icon></button><span class="thumb"></span><button aria-label="Scroll right"><ai-icon name="right10"></ai-icon></button>`);

define('ai-statusbar', `
  :host { display: flex; align-items: center; height: 18px; background: #4a4a4a; border-top: 1px solid #2a2a2a; border-bottom: 1px solid #1f1f1f; padding-left: 7px; box-sizing: border-box; }
  ai-combo { --h: 16px; }
  .sep { width: 1px; height: 16px; background: #333; }
  .tool { width: 207px; text-align: center; padding: 2px 8px 0 0; }
  ai-scroll { flex: 1; height: 16px; }
  .corner { width: 18px; }`, `
  <button aria-label="Sync settings"><ai-icon name="sync"></ai-icon></button>
  <button aria-label="Share on Behance" style="margin:0 13px 0 10px"><ai-icon name="export"></ai-icon></button>
  <ai-combo style="--w:66px;--pad:0px" label="Zoom" value="50%"></ai-combo>
  <button aria-label="First artboard" style="margin:0 10px 0 8px"><ai-icon name="first"></ai-icon></button><button aria-label="Previous artboard"><ai-icon name="prev"></ai-icon></button>
  <ai-combo style="--w:57px;margin-left:10px" label="Artboard" value="1"></ai-combo>
  <button aria-label="Next artboard" style="margin:0 10px 0 10px"><ai-icon name="next"></ai-icon></button><button aria-label="Last artboard"><ai-icon name="last"></ai-icon></button>
  <span class="sep" style="margin-left:8px"></span><span class="tool">Toggle Selection</span>
  <button aria-label="Status menu" style="margin-right:7px"><ai-icon name="right"></ai-icon></button>
  <ai-scroll></ai-scroll><span class="corner"></span>`);

define('ai-document', `
  :host { display: flex; flex-direction: column; flex: 1; min-width: 0; border-left: 1px solid #1f1f1f; border-right: 1px solid #222; box-sizing: border-box; }
  .tabs { display: flex; background: linear-gradient(#2c2c2c, #333); }
  .view { display: flex; flex: 1; }
  ai-artboard { flex: 1; min-width: 0; }`, `
  <div class="tabs"><ai-doctab>Lasercut-molds-all-v2.0-illustration1.ai @ 50% (CMYK/Overprint Preview)</ai-doctab><ai-doctab on>Lasercut-molds-all-v2.0-illustration version.ai @ 50% (CMYK/Overprint Preview)</ai-doctab></div>
  <div class="view"><ai-artboard></ai-artboard><ai-scroll vertical></ai-scroll></div>
  <ai-statusbar></ai-statusbar>`);

/* ---------- dock of collapsed panels ---------- */
define('ai-dock', `
  :host { display: block; width: 39px; background: #4a4a4a; border-left: 1px solid #5a5a5a; border-right: 2px solid #2a2a2a; box-sizing: border-box; }
  .head { display: flex; justify-content: flex-end; align-items: flex-start; height: 12px; padding: 2px 3px 0 0; background: #303030; border-bottom: 1px solid #222; }
  section { display: grid; justify-items: center; padding: 3px 0 2px; border-bottom: 1px solid #2a2a2a; border-top: 1px solid #585858; }
  section button { height: 28px; }
  ai-grip { margin-bottom: 2px; }`, () => {
  const group = names => `<section><ai-grip></ai-grip>${names.map(n => `<button aria-label="${n}"><ai-icon name="${n}"></ai-icon></button>`).join('')}</section>`;
  return `<div class="head"><button aria-label="Expand panels"><ai-icon name="collapse"></ai-icon></button></div>` +
    group(['kuler', 'guide', 'share']) + group(['align', 'pathf']) + group(['brushes', 'club']) + group(['charstyle', 'parastyle']) + group(['glyphs']);
});

/* ---------- panels ---------- */
define('ai-panel', `
  :host { display: block; background: #4a4a4a; border-bottom: 3px solid #2a2a2a; }
  .tabs { display: flex; height: 17px; background: linear-gradient(#2d2d2d, #343434); font-size: 12px; font-weight: bold; }
  .tabs button { padding: 0 5px 0 6px; color: #9a9a9a; border: 1px solid #222; border-width: 1px 1px 1px 0; border-top-color: transparent; gap: 3px; line-height: 14px; white-space: nowrap; }
  .tabs .on { color: #e2e2e2; background: #4a4a4a; border-bottom-color: #4a4a4a; border-top-color: #5c5c5c; }
  .tabs .menu { margin-left: auto; border-right: 0; }`,
  el => `<div class="tabs" role="tablist">${el.getAttribute('tabs').split('|').map((t, i) =>
    `<button role="tab" class="${i == el.getAttribute('active') ? 'on' : ''}">${el.hasAttribute('sort') && i == 0 ? '<ai-icon name="sort"></ai-icon>' : ''}${t}</button>`).join('')}
    <button class="menu" aria-label="Panel menu"><ai-icon name="flyout"></ai-icon></button></div><slot></slot>`);

const foot = `
  .foot { display: flex; align-items: center; }
  .foot .fill { flex: 1; }
  .foot button { width: 26px; height: 18px; }
  .foot ai-icon[name=resize] { align-self: flex-end; margin: 0 1px 0 10px; }`;

define('ai-layers', `
  :host { display: block; padding: 6px 0 0 6px; }
  .list { height: 171px; margin-right: 6px; border: 1px solid #2a2a2a; }
  .row { display: flex; height: 21px; background: #5a6476; border-bottom: 1px solid #2f333a; align-items: stretch; }
  .row > * { border-right: 1px solid #343a44; display: flex; align-items: center; justify-content: center; }
  .row .eye { width: 21px; padding-right: 3px; }
  .row .lock { width: 21px; }
  .bar { width: 6px; background: #5276fb; }
  .name { flex: 1; justify-content: flex-start; gap: 5px; padding-left: 6px; }
  .name ai-icon[name=thumb] { margin: 0 0 0 5px; }
  .row .last { border: 0; width: 34px; justify-content: flex-start; padding-left: 6px; position: relative; }
  .last::after { content: ""; position: absolute; right: 0; top: 0; border: 3px solid; border-color: #ddd #ddd transparent transparent; }
  .foot { height: 19px; }${foot}`, `
  <div class="list"><div class="row"><button class="eye" aria-label="Toggle visibility"><ai-icon name="eye"></ai-icon></button><button class="lock" aria-label="Toggle lock"></button><span class="bar"></span>
  <span class="name"><ai-icon name="right"></ai-icon><ai-icon name="thumb"></ai-icon>Layer 1</span><button class="last" aria-label="Target layer"><ai-icon name="target"></ai-icon></button></div></div>
  <div class="foot"><span>1 Layer</span><span class="fill"></span><button aria-label="Locate object"><ai-icon name="find"></ai-icon></button><button aria-label="Clipping mask"><ai-icon name="clip"></ai-icon></button><button aria-label="New sublayer"><ai-icon name="sublayer"></ai-icon></button><button aria-label="New layer"><ai-icon name="newitem"></ai-icon></button><button aria-label="Delete" style="color:#6b6b6b"><ai-icon name="trash"></ai-icon></button><ai-icon name="resize"></ai-icon></div>`);

define('ai-swatches', `
  :host { display: block; padding: 6px 0 0 6px; }
  .top { display: flex; justify-content: space-between; align-items: flex-start; height: 35px; margin-right: 6px; }
  .views { display: flex; border: 1px solid #262626; margin-top: 1px; }
  .views button { width: 25px; height: 20px; background: #5f5f5f; }
  .views .on { background: #2e2e2e; }
  .list { display: flex; height: 135px; margin-right: 6px; border: 1px solid #2a2a2a; }
  .cells { flex: 1; }
  .line { display: flex; } .group { margin-top: 2px; }
  .line > button { flex: none; width: 14px; height: 14px; border: 1px solid #666; border-width: 0 1px 1px 0; overflow: hidden; }
  .bar { width: 12px; background: #353535; display: flex; flex-direction: column; justify-content: space-between; align-items: center; padding: 4px 0; opacity: .9; }
  .bar ai-icon { opacity: .45; }
  .foot { height: 20px; }${foot}`, () => {
  const rows = [
    '#fff #e9e9e9 #fff #000 #f00 #fffb00 #00b050 #00b0f6 #3b1590 #ff0090 #d00018 #ff0014 #ff3608 #ff9000 #ffb020',
    '#f4f400 #d0ea00 #74d236 #00c34c #00a249 #006b38 #00c27c #00ada4 #10aae8 #0a70c2 #2e2c92 #2c1464 #700098 #a0008e #b00060',
    '#f00054 #ff007c #c5b698 #a38679 #736455 #5a4840 #cb9a68 #ae7a48 #8e5b34 #7a4822 #64360a #3e2212 linear-gradient(90deg,#fff,#222) linear-gradient(90deg,#ff0,#ff7a00_60%,#f02a00) linear-gradient(90deg,#1478c8,#d4e4ee)',
    '#000 #fff #efe0d4'
  ].map(r => r.split(' ').map(c => c.replace(/_/g, ' ')));
  const special = { '0,0':
    `<svg width="13" height="13"><path d="M1 12L12 1" stroke="#e00000" stroke-width="1.600"/></svg>`, '0,1':
    `<svg width="13" height="13" fill="none" stroke="#222"><circle cx="6.500" cy="6.500" r="4.500"/><circle cx="6.500" cy="6.500" r="2"/><path d="M6.500 0V13M0 6.500H13"/></svg>`, '0,2':
    `<svg width="13" height="13"><rect x="1.500" y="1.500" width="10" height="10" fill="none" stroke="#000"/></svg>`, '3,0':
    `<svg width="13" height="13"><circle cx="6.500" cy="6.500" r="4.500" fill="#fff"/><path d="M4 4H6V6H4ZM8 4H10V6H8ZM6 6H8V8H6ZM4 8H6V10H4ZM8 8H10V10H8Z" fill="#ccc"/></svg>`, '3,1':
    `<svg width="13" height="13"><path d="M0 0L5 1L3 4L0 3ZM13 0L8 1L10 4L13 3ZM0 13L5 12L3 9L0 10ZM13 13L8 12L10 9L13 10ZM2 4H11V9H2Z" fill="#4db53c"/><path d="M5 4H9V9H5Z" fill="#e0dc20"/></svg>`, '3,2':
    `<svg width="13" height="13" fill="none" stroke="#8a4c34" stroke-width="1.500"><path d="M0 2C3 0 4 4 6 2S10 0 13 2M1 6C3 4 4 8 6 6S10 4 13 7M0 10C3 8 4 12 6 10S10 8 13 11M4 0V3M9 4V8M3 8V13M11 9V13"/></svg>` };
  const cell = (c, inner = '') => `<button aria-label="Swatch" style="background:${c}">${inner}</button>`;
  const group = s => `<div class="line group">${cell('#5a5a5a', '<svg width="13" height="13"><path d="M1 3H5L6 5H12V11H1Z" fill="#a8a8a8"/></svg>')}${s.split(' ').map(c => cell(c)).join('')}</div>`;
  const f = (n, s = '') => `<button aria-label="${n}" style="${s}"><ai-icon name="${n}"></ai-icon></button>`;
  return `<div class="top"><ai-icon name="minifs"></ai-icon><div class="views"><button aria-label="List view"><ai-icon name="listview"></ai-icon></button><button class="on" aria-label="Thumbnail view"><ai-icon name="gridview"></ai-icon></button></div></div>
  <div class="list"><div class="cells">${rows.map((r, y) => `<div class="line">${r.map((c, x) => cell(c, special[y + ',' + x] || '')).join('')}</div>`).join('')}
  ${group('#000 #37373a #565659 #6c6d71 #808184 #929397 #a6a7aa #bbbcbe #d0d1d2 #e5e6e6 #f2f2f2')}${group('#f00 #ff5200 #ffe000 #00a94c #262f9e #8b2398')}</div>
  <div class="bar"><ai-icon name="up10"></ai-icon><ai-icon name="down10"></ai-icon></div></div>
  <div class="foot">${f('libs')}${f('sharesm')}${f('folderadd')}<span class="fill"></span>${f('kinds')}${f('options')}${f('folder')}${f('newitem')}${f('trash', 'color:#b9b9b9')}<ai-icon name="resize"></ai-icon></div>`;
});

define('ai-color', `
  :host { display: block; padding: 9px 17px 6px 6px; }
  .trio { display: flex; width: 40px; height: 14px; border: 1px solid #2a2a2a; }
  .trio button { flex: 1; overflow: hidden; }
  .spectrum { height: 159px; margin: 10px 0 0 1px; border: 1px solid #2a2a2a;
    background:
      linear-gradient(#fff, #ffffffb0 18%, #ffffff40 36%, #fff0 50%),
      linear-gradient(#0000 52%, #00000070 74%, #000000d8 90%, #000 100%),
      radial-gradient(ellipse 20% 30% at 34% 66%, #00c444 10%, #00c444a0 50%, #00c44400),
      radial-gradient(ellipse 24% 30% at 70% 78%, #2c0090 0, #2c0090a0 45%, #2c009000),
      linear-gradient(90deg, #f00 0 4%, #ff8a00 11%, #fbf600 17%, #b4e010 22%, #4cc840 34%, #4cc850 40%, #45d0d8 50%, #00c4f8 54%, #1f84d0 59%, #3f4cac 66%, #6a48a0 74%, #b03c98 82%, #ff0096 91%, #f00 99%); }`, `
  <div class="trio"><button aria-label="None"><ai-icon name="none"></ai-icon></button><button aria-label="Black" style="background:#030607"></button><button aria-label="White" style="background:#fff"></button></div>
  <div class="spectrum" role="img" aria-label="Colour spectrum"></div>`);

define('ai-transform', `
  :host { display: grid; grid-template-columns: 20px 1fr 16px; align-items: center; column-gap: 8px; padding: 7px 17px 7px 6px; color: #8a8a8a; }
  .f { display: grid; grid-template-columns: 14px 64px 14px 64px; column-gap: 5px; row-gap: 8px; align-items: center; justify-content: end; justify-items: start; margin-right: 2px; }
  label { justify-self: end; font-weight: bold; }
  input { width: 64px; height: 18px; border: 1px solid #333; background: #747474; padding: 0 3px; color: #505050; }
  ai-combo { --w: 59px; --h: 18px; --bg: #747474; --fg: #505050; --a1: #6a6a6a; --a2: #606060; }
  button { margin-top: -16px; }`, `
  <button aria-label="Reference point"><ai-icon name="refpt"></ai-icon></button>
  <div class="f"><label for="x">X:</label><input id="x" value="0 mm" disabled><label for="w">W:</label><input id="w" value="0 mm" disabled>
  <label for="y">Y:</label><input id="y" value="0 mm" disabled><label for="h">H:</label><input id="h" value="0 mm" disabled>
  <ai-icon name="angle"></ai-icon><ai-combo label="Rotate" value="0°" disabled></ai-combo><ai-icon name="shear"></ai-icon><ai-combo label="Shear" value="0°" disabled></ai-combo></div>
  <button aria-label="Constrain proportions"><ai-icon name="link"></ai-icon></button>`);

define('ai-panels', `
  :host { display: block; width: 246px; background: #4a4a4a; }
  .head { display: flex; justify-content: flex-end; align-items: flex-start; height: 12px; padding: 2px 4px 0 0; background: #303030; border-bottom: 1px solid #222; }`, `
  <div class="head"><button aria-label="Collapse panels"><ai-icon name="expand"></ai-icon></button></div>
  <ai-panel tabs="Artboards|Links|Libraries|Layers" active="3"><ai-layers></ai-layers></ai-panel>
  <ai-panel tabs="Stroke|Swatches|Graphic Styles" active="1"><ai-swatches></ai-swatches></ai-panel>
  <ai-panel tabs="Color|Transparency|Gradient" active="0" sort><ai-color></ai-color></ai-panel>
  <ai-panel tabs="Transform" active="0" sort><ai-transform></ai-transform></ai-panel>
  <ai-panel tabs="Character|Paragraph|OpenType" active="0" sort></ai-panel>`);

/* ---------- whole window, over a strip of the desktop ---------- */
define('ai-app', `
  :host { display: flex; flex-direction: column; min-height: 100vh; padding: 0 2px 4px 0; box-sizing: border-box;
    background: linear-gradient(#1d3050, #1d3050) bottom / 100% 1px no-repeat, linear-gradient(90deg, #2d62a8, #3c5c88 320px, #9a9a9a 320px) bottom / 100% 4px no-repeat, linear-gradient(#333 28px, #8e8e8e 28px 160px, #444 160px 200px, #999 200px); }
  .work { display: flex; flex: 1; background: #4a4a4a; }
  .work > * { flex-shrink: 0; } ai-document { flex: 1 1 0; }`, `
  <ai-titlebar></ai-titlebar><ai-controlbar></ai-controlbar>
  <div class="work"><ai-tools></ai-tools><ai-document></ai-document><ai-dock></ai-dock><ai-panels></ai-panels></div>`);
</script>
</body>
</html>
